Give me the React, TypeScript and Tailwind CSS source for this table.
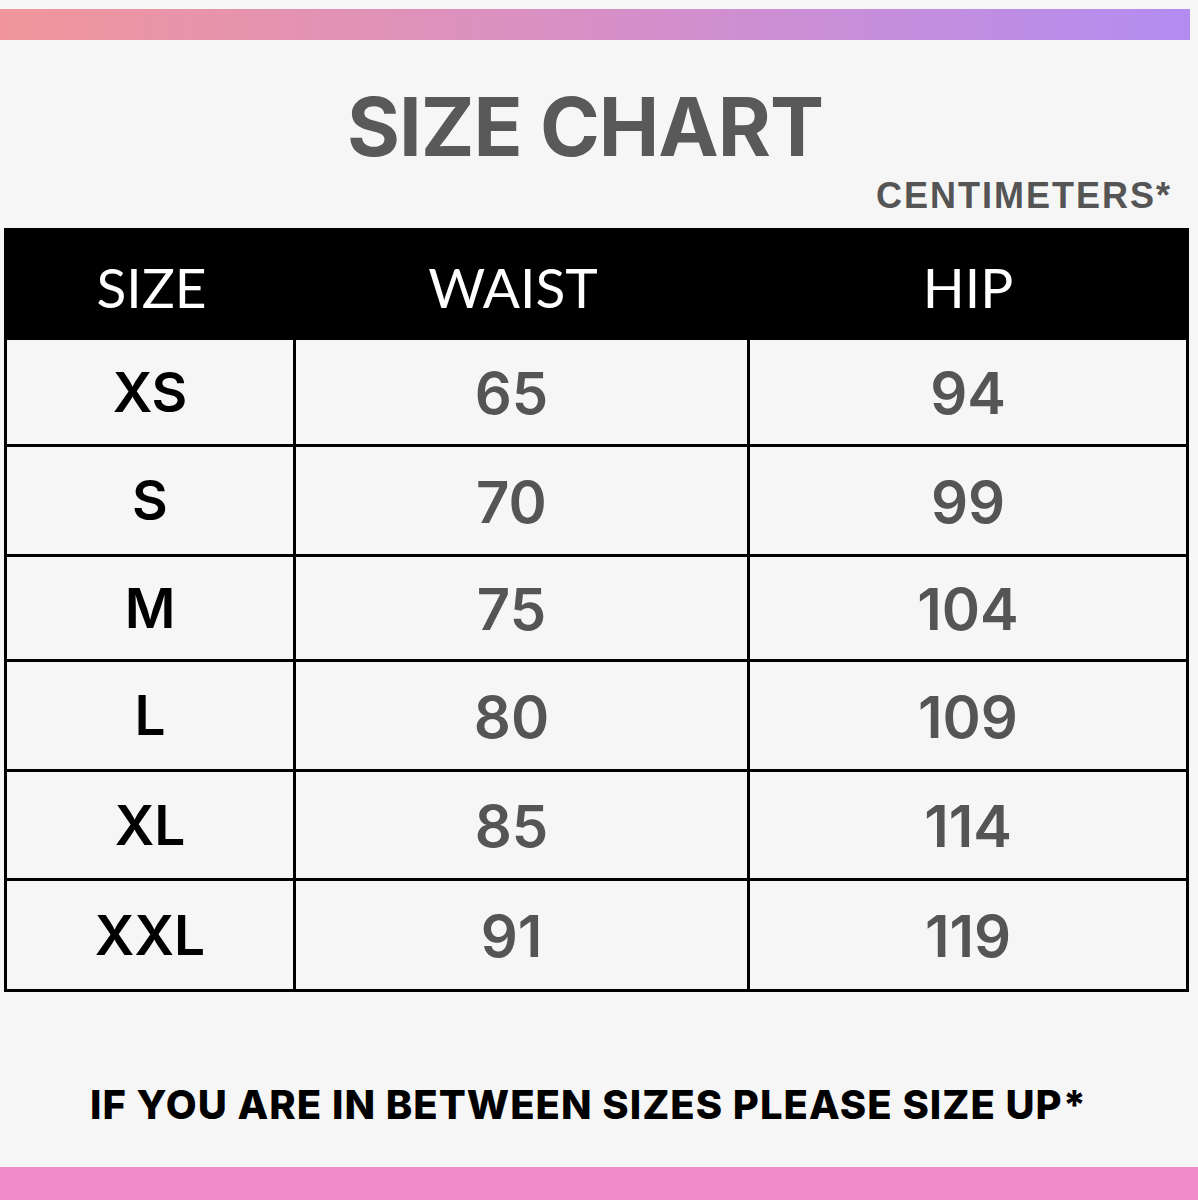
import React from "react";

const rows = [
  { size: "XS", waist: "65", hip: "94", h: "h-[107px]" },
  { size: "S", waist: "70", hip: "99", h: "h-[110px]" },
  { size: "M", waist: "75", hip: "104", h: "h-[105px]" },
  { size: "L", waist: "80", hip: "109", h: "h-[110px]" },
  { size: "XL", waist: "85", hip: "114", h: "h-[109px]" },
  { size: "XXL", waist: "91", hip: "119", h: "h-[108px]" },
];

export default function App() {
  return (
    <div className="w-[1198px] h-[1200px] bg-[#f6f6f6] flex flex-col overflow-hidden font-['Inter',sans-serif]">
      <div className="mt-[9px] h-[31px] w-[1190px] bg-gradient-to-r from-[#f0969b] via-[#d78fc6] to-[#b38cf1]" />
      <div className="mt-[42px] h-[90px] pr-[28px] flex justify-center items-center text-[81px] font-bold text-[#595959] leading-none tracking-[-1px]">
        SIZE CHART
      </div>
      <div className="h-[48px] flex justify-end items-center pr-[26px] text-[36px] font-bold text-[#555555] leading-none tracking-[2px] font-['Liberation_Sans',Arial,sans-serif]">
        CENTIMETERS*
      </div>
      <div className="ml-[4px] w-[1185px] mt-[8px] border-[3px] border-black">
        <div className="h-[109px] bg-black flex text-white text-[55px] leading-none font-['Lato',sans-serif]">
          <div className="w-[289px] flex items-center justify-center pt-[4px]">SIZE</div>
          <div className="w-[454px] flex items-center justify-center pt-[4px] pr-[20px]">WAIST</div>
          <div className="flex-1 flex items-center justify-center pt-[4px]">HIP</div>
        </div>
        {rows.map((r, i) => (
          <div
            key={r.size}
            className={`flex ${r.h} ${i < rows.length - 1 ? "border-b-[3px] border-black" : ""}`}
          >
            <div className="w-[289px] border-r-[3px] border-black flex items-center justify-center text-[55px] font-semibold text-black leading-none">
              {r.size}
            </div>
            <div className="w-[454px] border-r-[3px] border-black flex items-center justify-center pr-[20px] pt-[2px] text-[58px] font-semibold text-[#555555] leading-none">
              {r.waist}
            </div>
            <div className="flex-1 flex items-center justify-center pt-[2px] text-[58px] font-semibold text-[#555555] leading-none">
              {r.hip}
            </div>
          </div>
        ))}
      </div>
      <div className="mt-[88px] h-[50px] flex items-center pl-[90px] text-[40px] font-extrabold text-black leading-none tracking-[1px]">
        IF YOU ARE IN BETWEEN SIZES PLEASE SIZE UP*
      </div>
      <div className="mt-auto h-[33px] w-full bg-[#f08ac9]" />
    </div>
  );
}
